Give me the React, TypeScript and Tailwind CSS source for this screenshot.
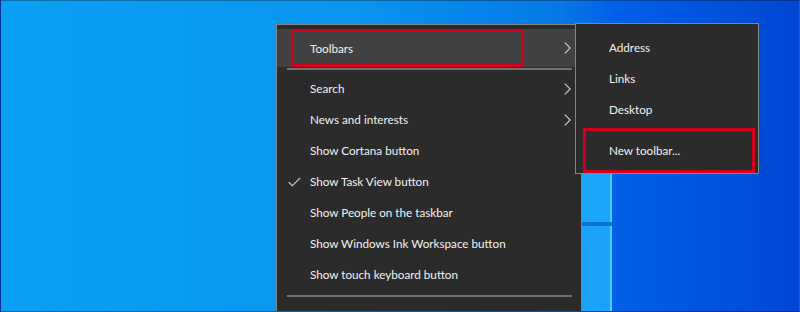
import React from 'react'

type Item = { label: string; checked?: boolean; submenu?: boolean; disabled?: boolean }

const mainItems: Item[] = [
  { label: 'Search', submenu: true },
  { label: 'News and interests', submenu: true },
  { label: 'Show Cortana button' },
  { label: 'Show Task View button', checked: true },
  { label: 'Show People on the taskbar' },
  { label: 'Show Windows Ink Workspace button' },
  { label: 'Show touch keyboard button' },
]

function Chevron() {
  return (
    <svg width="7" height="12" viewBox="0 0 7 12" className="ml-auto flex-shrink-0">
      <path d="M0.8 0.6 L6.2 6 L0.8 11.4" fill="none" stroke="#d2d2d2" strokeWidth="1.1" />
    </svg>
  )
}

function Check() {
  return (
    <svg width="13" height="10" viewBox="0 0 13 10" className="absolute left-[11px] top-[11px]">
      <path d="M0.8 5.2 L4.3 8.8 L12.2 0.8" fill="none" stroke="#d8d8d8" strokeWidth="1.1" />
    </svg>
  )
}

function MenuRow({ item }: { item: Item }) {
  return (
    <div className="relative flex items-center h-[31px] pl-[33px] pr-[10px]">
      {item.checked && <Check />}
      <span className={item.disabled ? 'pt-[1px] text-[#6d6d6d]' : 'pt-[1px] text-[#f2f2f2]'}>{item.label}</span>
      {item.submenu && <Chevron />}
    </div>
  )
}

function Separator({ className }: { className: string }) {
  return <div className={`h-[2px] bg-[#737373] ml-[10px] mr-[9px] ${className}`} />
}

export default function App() {
  return (
    <div
      className="relative w-[800px] h-[312px] overflow-hidden border border-black/30 bg-[linear-gradient(90deg,#0aa0f4_0%,#0994ef_45%,#0678e6_70%,#0060e6_77%,#0047d3_100%)] text-[11.7px] leading-none"
      style={{ fontFamily: 'Lato, "Noto Sans", sans-serif' }}
    >
      {/* windows logo pane in the wallpaper */}
      <div className="absolute left-[580px] top-[140px] w-[31px] h-[180px] flex flex-col">
        <div className="h-[81px] bg-[#1aa6f9] border-r-[2px] border-[#52c9ff]" />
        <div className="h-[4px] bg-[#0a6fd6]" />
        <div className="flex-1 bg-[#1aa3f8] border-r-[2px] border-[#52c9ff]" />
      </div>

      {/* main context menu */}
      <div className="absolute left-[275px] top-[23px] w-[306px] h-[300px] bg-[#2b2b2b] border border-[#858585] pt-[4px]">
        <div className="flex items-center h-[38px] pl-[33px] pr-[10px] bg-[#414141]">
          <span className="pt-[1px] text-[#f2f2f2]">Toolbars</span>
          <Chevron />
        </div>
        <Separator className="mt-[1px] mb-[3px]" />
        {mainItems.map((item) => (
          <MenuRow key={item.label} item={item} />
        ))}
        <Separator className="mt-[5px] mb-[4px]" />
        <MenuRow item={{ label: 'Cascade windows', disabled: true }} />
      </div>

      {/* toolbars submenu */}
      <div className="absolute left-[574px] top-[22px] w-[184px] bg-[#2b2b2b] border border-[#858585] pt-[8px] pb-[7px]">
        <MenuRow item={{ label: 'Address' }} />
        <MenuRow item={{ label: 'Links' }} />
        <MenuRow item={{ label: 'Desktop' }} />
        <div className="h-[10px]" />
        <MenuRow item={{ label: 'New toolbar...' }} />
      </div>

      {/* annotation boxes */}
      <div className="absolute left-[290px] top-[28px] w-[233px] h-[38px] border-[3px] border-[#d2001a]" />
      <div className="absolute left-[582px] top-[127px] w-[172px] h-[45px] border-[3px] border-[#d2001a]" />
    </div>
  )
}
